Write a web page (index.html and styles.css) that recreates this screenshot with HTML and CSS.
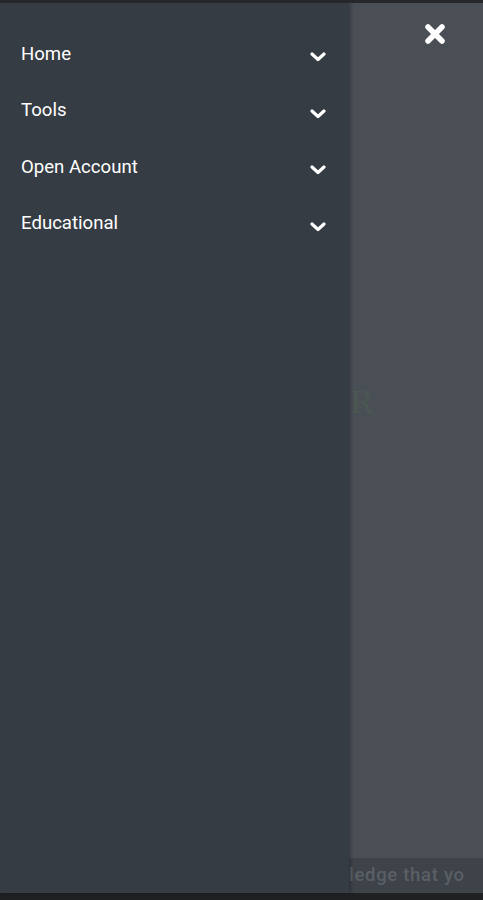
FILE: index.html
```html
<!DOCTYPE html>
<html lang="en">
<head>
  <meta charset="UTF-8" />
  <meta name="viewport" content="width=device-width, initial-scale=1" />
  <title>Menu</title>
  <link rel="stylesheet" href="styles.css">
</head>
<body>
  <div class="screen">
    <nav class="drawer">
      <ul class="menu">
        <li class="menu-item"><span>Home</span><svg class="chev" viewBox="0 0 16 10"><path d="M2 2 L8 7.5 L14 2" /></svg></li>
        <li class="menu-item"><span>Tools</span><svg class="chev" viewBox="0 0 16 10"><path d="M2 2 L8 7.5 L14 2" /></svg></li>
        <li class="menu-item"><span>Open Account</span><svg class="chev" viewBox="0 0 16 10"><path d="M2 2 L8 7.5 L14 2" /></svg></li>
        <li class="menu-item"><span>Educational</span><svg class="chev" viewBox="0 0 16 10"><path d="M2 2 L8 7.5 L14 2" /></svg></li>
      </ul>
    </nav>

    <div class="backdrop">
      <div class="overlay">
        <button class="close" aria-label="Close menu">
          <svg viewBox="0 0 24 24"><path d="M5 5 L19 19 M19 5 L5 19" /></svg>
        </button>
        <span class="logo-ghost">R</span>
      </div>
      <div class="strip">ledge that yo</div>
    </div>
  </div>
  <div class="bottom-bar"></div>
</body>
</html>
```

FILE: styles.css
```css
* {
  box-sizing: border-box;
  margin: 0;
  padding: 0;
}

body {
  background: #1f2022;
  font-family: Roboto, 'Liberation Sans', sans-serif;
  border-top: 3px solid #25272a;
}

.screen {
  display: flex;
  height: 890px;
}

.drawer {
  width: 349px;
  flex-shrink: 0;
  background: #363c43;
  box-shadow: 2px 0 3px rgba(0, 0, 0, 0.25);
  position: relative;
  z-index: 1;
  padding-top: 24px;
}

.menu {
  list-style: none;
}

.menu-item {
  display: flex;
  align-items: center;
  justify-content: space-between;
  height: 56.5px;
  padding: 0 23px 0 21px;
  color: #fff;
  font-size: 18.6px;
}

.menu-item span {
  margin-top: -3px;
}

.chev {
  width: 16px;
  height: 10px;
  margin-top: 4px;
}

.chev path {
  fill: none;
  stroke: #fff;
  stroke-width: 3.2;
  stroke-linecap: round;
  stroke-linejoin: round;
}

.backdrop {
  flex: 1;
  display: flex;
  flex-direction: column;
}

.overlay {
  flex: 1;
  background: #4a4e55;
  padding-top: 385px;
  position: relative;
}

.close {
  position: absolute;
  top: 19px;
  right: 36px;
  width: 24px;
  height: 24px;
  background: none;
  border: none;
}

.close svg {
  width: 24px;
  height: 24px;
}

.close path {
  stroke: #fff;
  stroke-width: 5.5;
  stroke-linecap: round;
}

.logo-ghost {
  display: block;
  margin-left: 1px;
  font-family: 'DejaVu Serif', serif;
  font-size: 30px;
  line-height: 1;
  color: #4b5852;
}

.strip {
  height: 35px;
  background: #3e4249;
  color: #5a5f65;
  font-size: 18.5px;
  font-weight: 500;
  letter-spacing: 0.7px;
  padding: 6px 0 0 0;
  white-space: nowrap;
  overflow: hidden;
}

.bottom-bar {
  height: 7px;
  background: #1f2022;
}
```
